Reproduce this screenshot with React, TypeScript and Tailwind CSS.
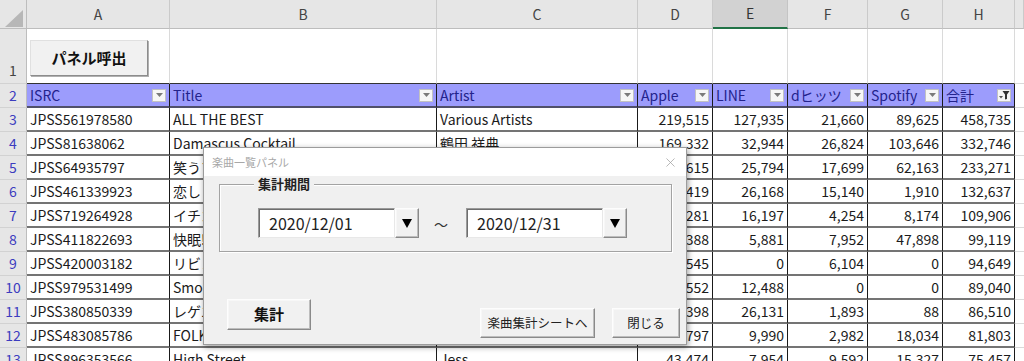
import React from 'react';
import { X } from 'lucide-react';

const COLS = 'grid grid-cols-[27px_143px_267px_201px_75px_75px_80px_75px_72px_9px]';

const letters = ['A', 'B', 'C', 'D', 'E', 'F', 'G', 'H', ''];
const headers = ['ISRC', 'Title', 'Artist', 'Apple', 'LINE', 'dヒッツ', 'Spotify', '合計'];

// D = 合計 - (LINE + dヒッツ + Spotify)
const rows = [
  ['JPSS561978580', 'ALL THE BEST', 'Various Artists', '219,515', '127,935', '21,660', '89,625', '458,735'],
  ['JPSS81638062', 'Damascus Cocktail', '鶴田 祥典', '169,332', '32,944', '26,824', '103,646', '332,746'],
  ['JPSS64935797', '笑うフェイス', 'Various Artists', '127,615', '25,794', '17,699', '62,163', '233,271'],
  ['JPSS461339923', '恋しくて', 'Various Artists', '89,419', '26,168', '15,140', '1,910', '132,637'],
  ['JPSS719264928', 'イチゴ', 'Various Artists', '81,281', '16,197', '4,254', '8,174', '109,906'],
  ['JPSS411822693', '快眠!', 'Various Artists', '37,388', '5,881', '7,952', '47,898', '99,119'],
  ['JPSS420003182', 'リビング', 'Various Artists', '88,545', '0', '6,104', '0', '94,649'],
  ['JPSS979531499', 'Smooth', 'Various Artists', '76,552', '12,488', '0', '0', '89,040'],
  ['JPSS380850339', 'レゲエ', 'Various Artists', '58,398', '26,131', '1,893', '88', '86,510'],
  ['JPSS483085786', 'FOLK', 'Various Artists', '50,797', '9,990', '2,982', '18,034', '81,803'],
  ['JPSS896353566', 'High Street', 'Jess', '43,474', '7,954', '9,592', '15,327', '75,457'],
];

const FilterButton = ({ active }: { active?: boolean }) => (
  <span className="ml-auto mr-[3px] w-[14px] h-[13px] shrink-0 bg-[#f6f6f6] border border-[#c2c2c2] flex items-center justify-center">
    {active ? (
      <svg width="11" height="10" viewBox="0 0 11 10">
        <polygon points="0,6 4,6 2,8.5" fill="#555" />
        <polygon points="3.5,1 10.5,1 8,4.5 8,9 6,9.5 6,4.5" fill="#333" />
      </svg>
    ) : (
      <svg width="7" height="4" viewBox="0 0 7 4">
        <polygon points="0,0 7,0 3.5,4" fill="#7a7a7a" />
      </svg>
    )}
  </span>
);

const raised =
  'bg-[#f1f1f1] border border-t-[#fdfdfd] border-l-[#fdfdfd] border-r-[#8a8a8a] border-b-[#8a8a8a] shadow-[inset_-1px_-1px_0_#bdbdbd,inset_1px_1px_0_#f7f7f7]';
const sunken =
  'bg-white border border-t-[#9a9a9a] border-l-[#9a9a9a] border-r-[#e8e8e8] border-b-[#e8e8e8] shadow-[inset_1px_1px_0_#6e6e6e]';

const DateField = ({ value }: { value: string }) => (
  <div className="flex h-[30px]">
    <div className={`${sunken} w-[137px] h-full flex items-center pl-[10px] text-[16px] text-[#222]`}>{value}</div>
    <div className={`${raised} w-[24px] h-full flex items-center justify-center`}>
      <svg width="10" height="9" viewBox="0 0 10 9">
        <polygon points="0,0 10,0 5,9" fill="#000" />
      </svg>
    </div>
  </div>
);

const Panel = () => (
  <div className="absolute left-[203px] top-[147px] w-[484px] h-[198px] border border-[#9c9c9c] shadow-[1px_2px_6px_rgba(0,0,0,0.4)] flex flex-col">
    {/* title bar */}
    <div className="h-[28px] bg-white flex items-center px-[8px]">
      <span className="text-[11px] text-[#a8a8a8]">楽曲一覧パネル</span>
      <X className="ml-auto w-[15px] h-[15px] text-[#a0a0a0]" strokeWidth={1.2} />
    </div>
    <div className="flex-1 bg-[#f0f0f0] pl-[15px] pt-[8px]">
      {/* 集計期間 frame */}
      <div className="relative w-[453px] h-[68px] border border-[#a3a3a3] shadow-[inset_1px_1px_0_#fff,1px_1px_0_#fff] flex items-start pt-[23px] pl-[38px]">
        <span className="absolute left-[34px] -top-[9px] px-[4px] bg-[#f0f0f0] text-[13px] font-bold text-[#222] leading-[16px]">
          集計期間
        </span>
        <DateField value="2020/12/01" />
        <span className="ml-[15px] mr-[18px] mt-[6px] text-[14px] text-[#333]">～</span>
        <DateField value="2020/12/31" />
      </div>
      {/* buttons */}
      <div className="flex items-start mt-[47px]">
        <button className={`${raised} ml-[8px] w-[84px] h-[31px] text-[15px] font-bold text-[#111]`}>集計</button>
        <div className="ml-auto mr-[6px] mt-[9px] flex gap-[17px]">
          <button className={`${raised} w-[115px] h-[30px] text-[12.5px] text-[#222]`}>楽曲集計シートへ</button>
          <button className={`${raised} w-[68px] h-[30px] text-[12.5px] text-[#222]`}>閉じる</button>
        </div>
      </div>
    </div>
  </div>
);

const App = () => {
  return (
    <div className="relative w-[1024px] h-[361px] overflow-hidden bg-white font-['Noto_Sans_CJK_JP',sans-serif] text-[14px] text-[#1b1b1b]">
      {/* column letters */}
      <div className={`${COLS} h-[29px]`}>
        <div className="bg-[#e6e6e6] border-r border-b border-[#bdbdbd] relative">
          <svg className="absolute left-[5px] top-[10px]" width="18" height="17" viewBox="0 0 18 17">
            <polygon points="18,0 18,17 0,17" fill="#b7b7b7" />
          </svg>
        </div>
        {letters.map((l, i) => (
          <div
            key={i}
            className={
              l === 'E'
                ? 'bg-[#d2d2d2] border-r border-[#c4c4c4] border-b-2 border-b-[#217346] flex items-center justify-center text-[#333]'
                : 'bg-[#e6e6e6] border-r border-b border-r-[#cacaca] border-b-[#bdbdbd] flex items-center justify-center text-[#444]'
            }
          >
            {l}
          </div>
        ))}
      </div>

      {/* row 1 */}
      <div className={`${COLS} h-[55px]`}>
        <div className="bg-[#e6e6e6] border-r border-b border-r-[#bdbdbd] border-b-[#d2d2d2] flex items-end justify-center pb-[2px] text-[#444]">1</div>
        <div className="border-r border-r-[#dadada] border-b border-b-[#333] pl-[3px] pt-[11px]">
          <button className="w-[118px] h-[36px] bg-[#f1f1f1] border border-t-[#e0e0e0] border-l-[#e0e0e0] border-r-[#8c8c8c] border-b-[#8c8c8c] shadow-[1px_1px_0_#b0b0b0] text-[15px] font-bold text-[#111]">
            パネル呼出
          </button>
        </div>
        {letters.slice(1).map((l, i) => (
          <div
            key={i}
            className={
              l === ''
                ? 'border-b border-[#dadada]'
                : 'border-r border-r-[#dadada] border-b border-b-[#333]'
            }
          />
        ))}
      </div>

      {/* row 2: table header */}
      <div className={`${COLS} h-[24px]`}>
        <div className="bg-[#e6e6e6] border-r border-b border-r-[#bdbdbd] border-b-[#d2d2d2] flex items-center justify-center text-[#3c3cbf]">2</div>
        {headers.map((h, i) => (
          <div key={h} className="bg-[#9c9cfc] border-r border-r-[#1a1a1a] border-b-2 border-b-[#50506a] flex items-center pl-[3px] text-[#23238c] overflow-hidden">
            <span className="whitespace-nowrap">{h}</span>
            <FilterButton active={i === headers.length - 1} />
          </div>
        ))}
        <div className="border-b border-[#dadada]" />
      </div>

      {/* data rows */}
      {rows.map((r, ri) => (
        <div key={ri} className={`${COLS} h-[24px]`}>
          <div className="bg-[#e6e6e6] border-r border-b border-r-[#bdbdbd] border-b-[#d2d2d2] flex items-center justify-center text-[#3c3cbf]">
            {ri + 3}
          </div>
          {r.map((c, ci) => (
            <div
              key={ci}
              className={`border-r border-r-[#1a1a1a] border-b-2 border-b-[#747474] flex items-center overflow-hidden whitespace-nowrap ${
                ci >= 3 ? 'justify-end pr-[3px]' : 'pl-[3px]'
              }`}
            >
              {c}
            </div>
          ))}
          <div className="border-b border-[#dadada]" />
        </div>
      ))}

      <Panel />
    </div>
  );
};

export default App;
